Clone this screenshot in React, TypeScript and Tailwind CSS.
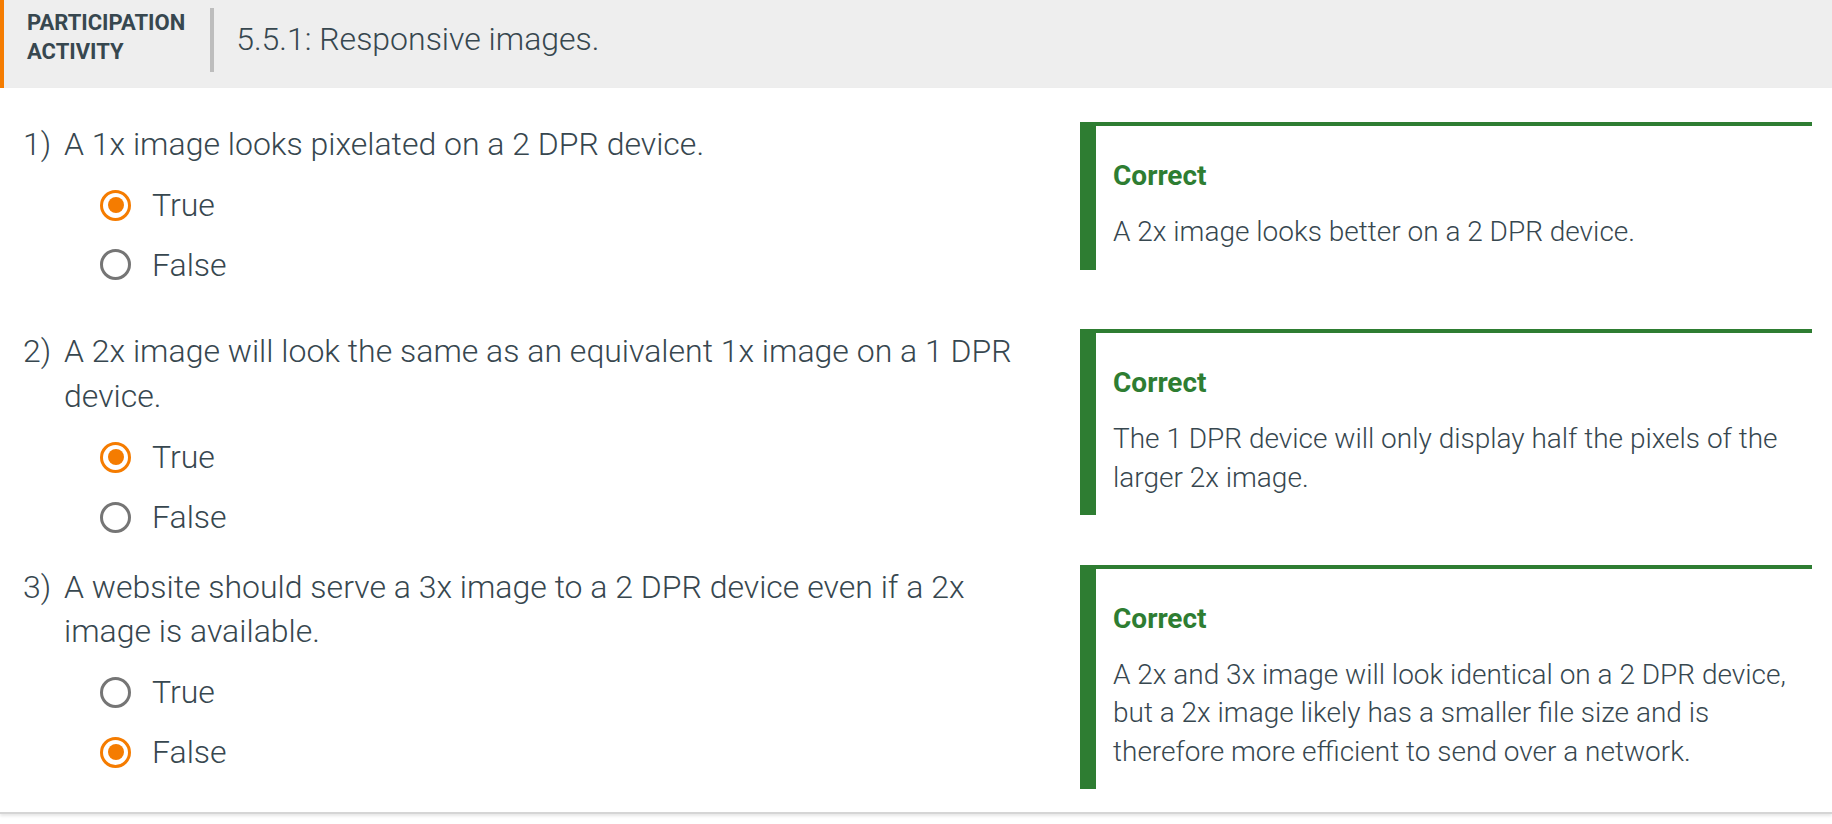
const questions = [
  {
    num: "1)",
    text: "A 1x image looks pixelated on a 2 DPR device.",
    picked: 0,
    feedback: "A 2x image looks better on a 2 DPR device.",
    gap: "mt-0",
  },
  {
    num: "2)",
    text: "A 2x image will look the same as an equivalent 1x image on a 1 DPR device.",
    picked: 0,
    feedback: "The 1 DPR device will only display half the pixels of the larger 2x image.",
    gap: "mt-[42px]",
  },
  {
    num: "3)",
    text: "A website should serve a 3x image to a 2 DPR device even if a 2x image is available.",
    picked: 1,
    feedback:
      "A 2x and 3x image will look identical on a 2 DPR device, but a 2x image likely has a smaller file size and is therefore more efficient to send over a network.",
    gap: "mt-[25px]",
  },
];

function Radio({ checked }: { checked: boolean }) {
  if (checked) {
    return (
      <span className="flex h-[31px] w-[31px] shrink-0 items-center justify-center rounded-full border-[3.5px] border-[#f57c00]">
        <span className="h-[16px] w-[16px] rounded-full bg-[#f57c00]" />
      </span>
    );
  }
  return <span className="h-[31px] w-[31px] shrink-0 rounded-full border-[3.5px] border-[#757575]" />;
}

function Option({ label, checked, first }: { label: string; checked: boolean; first: boolean }) {
  return (
    <div className={`flex h-[44.8px] items-center pl-[36px] ${first ? "mt-[16px]" : "mt-[15px]"}`}>
      <Radio checked={checked} />
      <span className="ml-[21px] text-[32px] leading-[44.8px]">{label}</span>
    </div>
  );
}

function Feedback({ text }: { text: string }) {
  return (
    <div className="w-[732px] shrink-0 border-t-4 border-l-[16px] border-[#2e7d32] pt-[31px] pr-[16px] pb-[18px] pl-[17px]">
      <div className="text-[28px] font-bold leading-[38px] text-[#2e7d32]">Correct</div>
      <p className="mt-[18px] text-[28px] leading-[38.5px]">{text}</p>
    </div>
  );
}

export default function App() {
  return (
    <div className="min-h-screen bg-white font-['Roboto',sans-serif] font-light text-[#37474f]">
      <div className="flex h-[88px] border-l-4 border-[#f57c00] bg-[#eeeeee] pt-[8px] pb-[16px] pl-[23px]">
        <div className="flex h-[64px] items-center pb-[6px]">
          <div className="text-[22px] font-bold leading-[29px]">
            PARTICIPATION
            <br />
            ACTIVITY
          </div>
        </div>
        <div className="ml-[25px] h-[64px] w-[4px] bg-[#bdbdbd]" />
        <div className="ml-[22px] flex h-[64px] items-center pb-[2px] text-[32px] leading-[40px]">
          5.5.1: Responsive images.
        </div>
      </div>

      <div className="border-b-2 border-[#d5d5d5] pt-[34px] pr-[20px] pb-[23px] pl-[23px] shadow-[0_2px_3px_rgba(0,0,0,0.1)]">
        {questions.map((q) => (
          <div key={q.num} className={`flex items-start ${q.gap}`}>
            <div className="flex flex-1 pr-[40px]">
              <span className="w-[41px] shrink-0 text-[32px] leading-[44.8px]">{q.num}</span>
              <div className="flex-1">
                <p className="text-[32px] leading-[44.8px]">{q.text}</p>
                <Option label="True" checked={q.picked === 0} first />
                <Option label="False" checked={q.picked === 1} first={false} />
              </div>
            </div>
            <Feedback text={q.feedback} />
          </div>
        ))}
      </div>
    </div>
  );
}
